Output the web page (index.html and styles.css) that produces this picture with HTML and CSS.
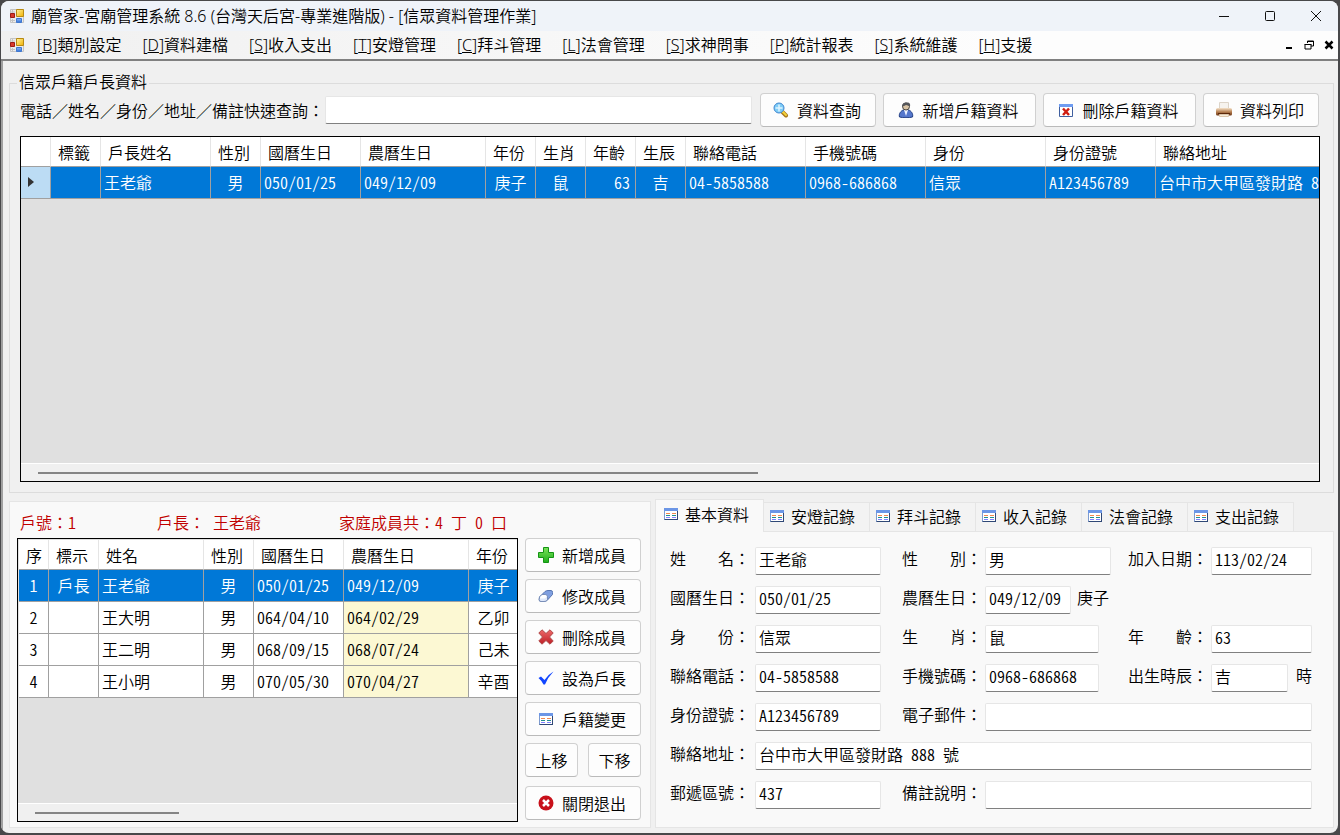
FILE: index.html
```html
<!DOCTYPE html>
<html lang="zh-Hant-TW">
<head>
<meta charset="utf-8">
<title>廟管家-宮廟管理系統 8.6</title>
<link rel="stylesheet" href="styles.css">
</head>
<body>
<svg class="defs" aria-hidden="true">
  <defs>
    <linearGradient id="gYellow" x1="0" y1="0" x2="1" y2="1"><stop offset="0" stop-color="#fff3a0"/><stop offset="1" stop-color="#f0b000"/></linearGradient>
    <linearGradient id="gBlue" x1="0" y1="0" x2="0" y2="1"><stop offset="0" stop-color="#8fb8f4"/><stop offset="1" stop-color="#2f6fd6"/></linearGradient>
    <linearGradient id="gGreen" x1="0" y1="0" x2="0" y2="1"><stop offset="0" stop-color="#7be35a"/><stop offset="1" stop-color="#1fae1c"/></linearGradient>
    <linearGradient id="gBrown" x1="0" y1="0" x2="0" y2="1"><stop offset="0" stop-color="#f5e3cb"/><stop offset=".5" stop-color="#b98354"/><stop offset="1" stop-color="#6b3312"/></linearGradient>
    <linearGradient id="gRed" x1="0" y1="0" x2="0" y2="1"><stop offset="0" stop-color="#ee6a6a"/><stop offset="1" stop-color="#bd1e26"/></linearGradient>
    <symbol id="i-app" viewBox="0 0 16 16">
      <path d="M1.500 1.500h13v13h-13z" fill="#ececec" stroke="#c4c4c4"/>
      <path d="M1 4h5M3.500 1v4M1 12.500h5M3.500 11v4" stroke="#c4c4c4"/>
      <path d="M1.500 5.500h4v4h-4z" fill="#d8392b" stroke="#9c1c14"/>
      <path d="M7.500 1.500h7v7h-7z" fill="url(#gYellow)" stroke="#b88a12"/>
      <path d="M7.500 10.500h5v4h-5z" fill="url(#gBlue)" stroke="#3f78d0"/>
    </symbol>
    <symbol id="i-search" viewBox="0 0 16 16">
      <path d="M9.500 10l3.500 3.500" stroke="#a9781c" stroke-width="4" stroke-linecap="round"/>
      <path d="M9.500 9.500l3.500 3.500" stroke="#f3d23a" stroke-width="2" stroke-linecap="round"/>
      <circle cx="6" cy="6" r="5" fill="#7fcdf7" stroke="#3f86d0"/>
      <path d="M6 2.500v7M2.500 6h7" stroke="#dff4ff" stroke-width="1.500"/>
    </symbol>
    <symbol id="i-user" viewBox="0 0 16 16">
      <path d="M1.500 15C.5 12 3 8.500 5.500 8h5c2.500.5 5 4 4 7-4 1-9 1-13 0z" fill="#5577cc" stroke="#1f3c80"/>
      <path d="M6 8l2 6 2-6z" fill="#eef3ff"/>
      <circle cx="8" cy="4.500" r="3.500" fill="#d8c3a4" stroke="#4a4540"/>
      <path d="M4 5C4 1 7 0 9 .5c3 0 3.500 2 3 4C10.500 4 9 3 8 3 7 4 5 4 4 5z" fill="#55565a"/>
    </symbol>
    <symbol id="i-windel" viewBox="0 0 16 16">
      <path d="M1.500 2.500h13v12h-13z" fill="#fff" stroke="#3f5f9f"/>
      <path d="M1 2h14v3H1z" fill="#6f9cf0"/>
      <path d="M5 6.500l6 6.500M11 6.500l-6 6.500" stroke="#cf1d12" stroke-width="2.500"/>
    </symbol>
    <symbol id="i-print" viewBox="0 0 16 16">
      <path d="M3.500.5h9v6h-9z" fill="#f6f3ee" stroke="#ddd4c8"/>
      <rect x="0" y="6" width="16" height="7.500" rx="1.500" fill="url(#gBrown)"/>
      <path d="M2 11.500h12" stroke="#5b2708"/>
      <path d="M3.500 12.500h9v2h-9z" fill="#f6ead9" stroke="#dcc6aa"/>
    </symbol>
    <symbol id="i-plus" viewBox="0 0 16 16">
      <path d="M5.500.5h5v5h5v5h-5v5h-5v-5h-5v-5h5z" fill="url(#gGreen)" stroke="#149414"/>
    </symbol>
    <symbol id="i-eraser" viewBox="0 0 16 16">
      <path d="M1.500 9l5.500-5.500Q8.500 2.500 10 2.500h3q1.800.2 1.500 2v2L9.500 12Q8 13.500 6 13.500H3Q1 13.500 1.200 11.500z" fill="#7f9fe0" stroke="#5876b2"/>
      <path d="M1.500 9l2.500-2.500h3q2.500.2 2.500 2.500v3Q8 13.500 6 13.500H3Q1 13.500 1.200 11.500z" fill="#dfe8fa" stroke="#7a8fb8"/>
      <path d="M2.500 8.500L4.500 7H7q1.500.3 1.800 1.500L7 10.500H2z" fill="#fff"/>
    </symbol>
    <symbol id="i-cross" viewBox="0 0 16 16">
      <path d="M4 .8l4 3.700L12 .8 15.200 4l-3.700 4 3.700 4-3.200 3.200-4-3.700-4 3.700L.8 12l3.700-4L.8 4z" fill="url(#gRed)" stroke="#b04848" stroke-linejoin="round"/>
    </symbol>
    <symbol id="i-check" viewBox="0 0 16 16">
      <path d="M.5 8l2.500-1.500 3.500 3.500Q10 4.500 15.500 1.500 10 7 7 14.500H5.500Q4 11 .5 8z" fill="#1246ff"/>
    </symbol>
    <symbol id="i-form" viewBox="0 0 16 16">
      <path d="M1.500 2.500h13v11h-13z" fill="#fff" stroke="#7d9bd0"/>
      <path d="M1 2h14v3H1z" fill="#6c96e6"/>
      <path d="M14.500 5v9M1.500 13.500H15" stroke="#2f4876"/>
      <path d="M3 7.500h4M9 7.500h4" stroke="#f08850"/>
      <path d="M3 9.500h4M9 9.500h4" stroke="#218d8d"/>
      <path d="M3 11.500h4M9 11.500h4" stroke="#8080ff"/>
    </symbol>
    <symbol id="i-close" viewBox="0 0 16 16">
      <circle cx="8" cy="8" r="7.500" fill="#c8101a"/>
      <path d="M5 5l6 6M11 5l-6 6" stroke="#fff" stroke-width="2.500"/>
    </symbol>
  </defs>
</svg>

<div class="window">
  <header class="titlebar">
    <svg class="icon"><use href="#i-app"/></svg>
    <h1 class="title">廟管家-宮廟管理系統 8.6 (台灣天后宮-專業進階版) - [信眾資料管理作業]</h1>
    <div class="winbtns">
      <button class="winbtn" aria-label="最小化"><svg viewBox="0 0 12 12"><path d="M1 6.500h10"/></svg></button>
      <button class="winbtn" aria-label="最大化"><svg viewBox="0 0 12 12"><rect x="1.500" y="1.500" width="9" height="9" rx="1"/></svg></button>
      <button class="winbtn" aria-label="關閉"><svg viewBox="0 0 12 12"><path d="M1 1l10 10M11 1L1 11"/></svg></button>
    </div>
  </header>
  <nav class="menubar">
    <svg class="icon"><use href="#i-app"/></svg>
    <div class="menus">
      <button class="menu">[<u>B</u>]類別設定</button>
      <button class="menu">[<u>D</u>]資料建檔</button>
      <button class="menu">[<u>S</u>]收入支出</button>
      <button class="menu">[<u>T</u>]安燈管理</button>
      <button class="menu">[<u>C</u>]拜斗管理</button>
      <button class="menu">[<u>L</u>]法會管理</button>
      <button class="menu">[<u>S</u>]求神問事</button>
      <button class="menu">[<u>P</u>]統計報表</button>
      <button class="menu">[<u>S</u>]系統維護</button>
      <button class="menu">[<u>H</u>]支援</button>
    </div>
    <div class="mdibtns">
      <button class="mdibtn" aria-label="最小化子視窗"><svg viewBox="0 0 10 10"><path d="M2 8h6" stroke-width="2"/></svg></button>
      <button class="mdibtn" aria-label="還原子視窗"><svg viewBox="0 0 10 10"><path d="M3.500 3V1h6v5H7M3 1.500h7M1 4.500h6v4.500H1zM.5 4.500h7"/></svg></button>
      <button class="mdibtn" aria-label="關閉子視窗"><svg viewBox="0 0 10 10"><path d="M1.500 1.500l7 7M8.500 1.500l-7 7" stroke-width="2.500"/></svg></button>
    </div>
  </nav>

  <main class="content">
    <fieldset class="group">
      <legend>信眾戶籍戶長資料</legend>
      <div class="search">
        <label for="q">電話／姓名／身份／地址／備註快速查詢：</label>
        <input class="field grow" id="q" type="text">
        <div class="actions">
          <button class="btn"><svg class="icon"><use href="#i-search"/></svg>資料查詢</button>
          <button class="btn long"><svg class="icon"><use href="#i-user"/></svg>新增戶籍資料</button>
          <button class="btn long"><svg class="icon"><use href="#i-windel"/></svg>刪除戶籍資料</button>
          <button class="btn"><svg class="icon"><use href="#i-print"/></svg>資料列印</button>
        </div>
      </div>
      <div class="grid">
        <div class="viewport">
          <table class="households">
            <colgroup><col class="w30"><col class="w50"><col class="w110"><col class="w50"><col class="w100"><col class="w125"><col class="w50"><col class="w50"><col class="w50"><col class="w50"><col class="w120"><col class="w120"><col class="w120"><col class="w110"><col class="w300"></colgroup>
            <thead><tr><th></th><th>標籤</th><th>戶長姓名</th><th>性別</th><th>國曆生日</th><th>農曆生日</th><th>年份</th><th>生肖</th><th>年齡</th><th>生辰</th><th>聯絡電話</th><th>手機號碼</th><th>身份</th><th>身份證號</th><th>聯絡地址</th></tr></thead>
            <tbody><tr class="selected"><td class="rowhead"><svg class="marker" viewBox="0 0 6 10"><path d="M0 0l6 5-6 5z"/></svg></td><td></td><td>王老爺</td><td class="mid">男</td><td>050/01/25</td><td>049/12/09</td><td class="mid">庚子</td><td class="mid">鼠</td><td class="num">63</td><td class="mid">吉</td><td>04-5858588</td><td>0968-686868</td><td>信眾</td><td>A123456789</td><td>台中市大甲區發財路 888 號</td></tr></tbody>
          </table>
        </div>
        <div class="scroll"><div class="thumb wide"></div></div>
      </div>
    </fieldset>

    <div class="lower">
      <section class="family">
        <div class="summary">
          <span>戶號：<span class="half">1</span></span>
          <span>戶長：<span class="half"> 王老爺</span></span>
          <span>家庭成員共：<span class="half">4 丁 0 口</span></span>
        </div>
        <div class="familybody">
          <div class="grid">
            <div class="viewport inset">
              <table class="members">
                <colgroup><col class="w30"><col class="w50"><col class="w105"><col class="w50"><col class="w90"><col class="w125"><col class="w50"></colgroup>
                <thead><tr><th>序</th><th>標示</th><th>姓名</th><th>性別</th><th>國曆生日</th><th>農曆生日</th><th>年份</th></tr></thead>
                <tbody>
                  <tr class="selected"><td class="mid">1</td><td class="mid">戶長</td><td>王老爺</td><td class="mid">男</td><td>050/01/25</td><td class="lunar">049/12/09</td><td class="mid">庚子</td></tr>
                  <tr><td class="mid">2</td><td></td><td>王大明</td><td class="mid">男</td><td>064/04/10</td><td class="lunar">064/02/29</td><td class="mid">乙卯</td></tr>
                  <tr><td class="mid">3</td><td></td><td>王二明</td><td class="mid">男</td><td>068/09/15</td><td class="lunar">068/07/24</td><td class="mid">己未</td></tr>
                  <tr><td class="mid">4</td><td></td><td>王小明</td><td class="mid">男</td><td>070/05/30</td><td class="lunar">070/04/27</td><td class="mid">辛酉</td></tr>
                </tbody>
              </table>
            </div>
            <div class="scroll"><div class="thumb narrow"></div></div>
          </div>
          <div class="side">
            <button class="btn"><svg class="icon"><use href="#i-plus"/></svg>新增成員</button>
            <button class="btn"><svg class="icon"><use href="#i-eraser"/></svg>修改成員</button>
            <button class="btn"><svg class="icon"><use href="#i-cross"/></svg>刪除成員</button>
            <button class="btn"><svg class="icon"><use href="#i-check"/></svg>設為戶長</button>
            <button class="btn"><svg class="icon"><use href="#i-form"/></svg>戶籍變更</button>
            <div class="pair"><button class="btn">上移</button><button class="btn">下移</button></div>
            <button class="btn last"><svg class="icon"><use href="#i-close"/></svg>關閉退出</button>
          </div>
        </div>
      </section>

      <section class="detail">
        <div class="tabs" role="tablist">
          <button class="tab active" role="tab" aria-selected="true"><svg class="icon"><use href="#i-form"/></svg>基本資料</button>
          <button class="tab" role="tab"><svg class="icon"><use href="#i-form"/></svg>安燈記錄</button>
          <button class="tab" role="tab"><svg class="icon"><use href="#i-form"/></svg>拜斗記錄</button>
          <button class="tab" role="tab"><svg class="icon"><use href="#i-form"/></svg>收入記錄</button>
          <button class="tab" role="tab"><svg class="icon"><use href="#i-form"/></svg>法會記錄</button>
          <button class="tab" role="tab"><svg class="icon"><use href="#i-form"/></svg>支出記錄</button>
          <div class="tabfill"></div>
        </div>
        <form class="panel">
          <label for="f1">姓　　名：</label><input class="field" id="f1" value="王老爺">
          <label class="second" for="f2">性　　別：</label><input class="field" id="f2" value="男">
          <label class="third" for="f3">加入日期：</label><input class="field" id="f3" value="113/02/24">

          <label for="f4">國曆生日：</label><input class="field" id="f4" value="050/01/25">
          <label class="second" for="f5">農曆生日：</label>
          <div class="cell"><input class="field date" id="f5" value="049/12/09"><span>庚子</span></div>

          <label class="first" for="f6">身　　份：</label><input class="field" id="f6" value="信眾">
          <label class="second" for="f7">生　　肖：</label><div class="cell"><input class="field short" id="f7" value="鼠"></div>
          <label class="third" for="f8">年　　齡：</label><input class="field" id="f8" value="63">

          <label for="f9">聯絡電話：</label><input class="field" id="f9" value="04-5858588">
          <label class="second" for="f10">手機號碼：</label><div class="cell"><input class="field short" id="f10" value="0968-686868"></div>
          <label class="third" for="f11">出生時辰：</label><div class="cell hour"><input class="field grow" id="f11" value="吉"><span>時</span></div>

          <label for="f12">身份證號：</label><input class="field" id="f12" value="A123456789">
          <label class="second" for="f13">電子郵件：</label><input class="field span3" id="f13">

          <label for="f14">聯絡地址：</label><input class="field span5" id="f14" value="台中市大甲區發財路 888 號">

          <label for="f15">郵遞區號：</label><input class="field" id="f15" value="437">
          <label class="second" for="f16">備註說明：</label><input class="field span3" id="f16">
        </form>
      </section>
    </div>
  </main>
</div>
</body>
</html>
```
FILE: styles.css
```css
* { box-sizing: border-box; }

body {
  margin: 0;
  min-height: 100vh;
  display: flex;
  padding: 1px 2px 2px 1px;
  background: #48484a;
  color: #000;
  font: 350 16px/20px "Noto Sans CJK TC", sans-serif;
}

button, input { font: inherit; color: inherit; }
button { white-space: nowrap; }
label { white-space: nowrap; }

/* Half-width digits, so that data lines up two to a Chinese character */
table, .field, .half { font-feature-settings: "hwid"; }

.defs { position: absolute; width: 0; height: 0; }
.icon { width: 16px; height: 16px; flex: none; }

.window {
  flex: 1;
  min-width: 0;
  display: flex;
  flex-direction: column;
  background: #f0f0f0;
  border-radius: 8px;
  overflow: hidden;
}

/* Title bar and menu */
.titlebar, .menubar {
  display: flex;
  align-items: center;
  font-family: "Noto Sans", "Noto Sans CJK TC", sans-serif;
}
.titlebar { height: 30px; padding: 0 0 1px 8px; gap: 6px; background: #eff3f9; }
.title { margin: 0; font-size: 16px; font-weight: 350; flex: 1; }
.winbtns { display: flex; }
.winbtn {
  width: 46px;
  height: 29px;
  padding: 0 0 0 2px;
  border: 0;
  background: none;
  display: grid;
  place-items: center;
}
.winbtn svg { width: 12px; height: 12px; fill: none; stroke: #111; }

.menubar {
  height: 30px;
  padding: 0 4px 0 8px;
  gap: 4px;
  background: linear-gradient(90deg, #f0f0f0, #fdfdfd 75%);
  border-bottom: 2px solid #808080;
}
.menus { display: flex; flex: 1; gap: 5px; }
.menu { border: 0; background: none; padding: 0 8px; }
.mdibtns { display: flex; gap: 10px; }
.mdibtn { border: 0; background: none; padding: 0; width: 10px; height: 20px; display: flex; align-items: center; }
.mdibtn svg { width: 10px; height: 10px; display: block; fill: none; stroke: #000; }

/* Main area */
.content {
  flex: 1;
  display: flex;
  flex-direction: column;
  gap: 6px;
  padding: 12px 4px 5px 6px;
  border-left: 2px solid #a0a0a0;
}

.group {
  flex: 1;
  display: flex;
  flex-direction: column;
  gap: 9px;
  margin: 0;
  min-width: 0;
  padding: 0 13px 10px 10px;
  border: 1px solid #dcdcdc;
}
.group legend { padding: 0 2px 4px; margin-left: -3px; line-height: 16px; }

.search { display: flex; align-items: center; gap: 1px; padding-right: 1px; }
.actions { display: flex; gap: 7px; margin-left: 7px; }

.btn {
  display: flex;
  align-items: center;
  justify-content: center;
  gap: 8px;
  width: 116px;
  height: 34px;
  padding: 0 2px 1px 0;
  background: #fdfdfd;
  border: 1px solid #d0d0d0;
  border-bottom-color: #bababa;
  border-radius: 4px;
}
.long { width: 153px; }

.field {
  height: 28px;
  width: 100%;
  min-width: 0;
  padding: 0 3px 5px;
  background: #fff;
  border: 1px solid #e6e6e6;
  border-bottom-color: #808080;
  border-radius: 2px;
}
.grow { flex: 1; }

/* Data grids */
.grid {
  flex: 1;
  min-width: 0;
  display: flex;
  flex-direction: column;
  border: 1px solid #000;
  background: #e0e0e0;
}
.viewport { flex: 1; overflow: hidden; }
.inset { padding: 1px 0 0 1px; }

table { border-collapse: separate; border-spacing: 0; table-layout: fixed; }
.households { width: 1435px; }
.members { width: 500px; }
.w30 { width: 30px; }
.w50 { width: 50px; }
.w90 { width: 90px; }
.w100 { width: 100px; }
.w105 { width: 105px; }
.w110 { width: 110px; }
.w120 { width: 120px; }
.w125 { width: 125px; }
.w300 { width: 300px; }

th, td { overflow: hidden; white-space: nowrap; text-align: left; }
th {
  height: 30px;
  padding: 0 0 0 7px;
  font-weight: 350;
  background: #fff;
  border-right: 1px solid #e5e5e5;
  border-bottom: 1px solid #a0a0a0;
}
td {
  height: 32px;
  padding: 0 3px 1px;
  background: #fff;
  border-right: 1px solid #a0a0a0;
  border-bottom: 1px solid #a0a0a0;
}
.mid { text-align: center; }
.num { text-align: right; padding-right: 5px; }
.lunar { background: #fcf8d3; }
.selected td { background: #0078d7; color: #fff; }
.selected .rowhead { background: #bcdcf4; padding-left: 7px; }
.marker { display: block; width: 6px; height: 10px; fill: #333; }

.scroll {
  height: 18px;
  display: flex;
  align-items: center;
  background: #f0f0f0;
  border-top: 1px solid #fff;
  padding: 0 17px;
}
.thumb { height: 2px; background: #858585; }
.wide { width: 57%; }
.narrow { width: 31%; }

/* Lower half */
.lower {
  display: grid;
  grid-template-columns: minmax(0, 642fr) minmax(0, 679fr);
  gap: 4px;
}

.family {
  margin-top: 2px;
  padding: 10px 9px 5px 7px;
  display: flex;
  flex-direction: column;
  gap: 6px;
  background: #f9f9f9;
  border: 1px solid #e5e5e5;
}
.summary {
  display: grid;
  grid-template-columns: 137px 182px auto;
  padding-left: 3px;
  color: #c00000;
}
.familybody { flex: 1; display: flex; gap: 7px; }
.side { width: 116px; display: flex; flex-direction: column; gap: 7px; }
.pair { display: flex; justify-content: space-between; gap: 10px; }
.pair .btn { flex: 1; padding: 0 0 1px; }
.last { margin-top: 2px; }

.detail { display: flex; flex-direction: column; }
.tabs { display: flex; align-items: flex-end; }
.tab {
  display: flex;
  align-items: center;
  gap: 6px;
  height: 30px;
  padding: 0 14px 2px 5px;
  background: #f3f3f3;
  border: 1px solid #e5e5e5;
  border-left-width: 0;
}
.tab.active {
  height: 33px;
  padding: 0 14px 4px 7px;
  background: #f9f9f9;
  border-width: 1px 1px 0 1px;
}
.tabfill { flex: 1; border-bottom: 1px solid #e5e5e5; }

.panel {
  flex: 1;
  display: grid;
  grid-template-columns: 85px 126px 104px 126px 100px minmax(0, 1fr);
  grid-auto-rows: 28px;
  row-gap: 11px;
  align-items: center;
  align-content: start;
  padding: 15px 21px 18px 14px;
  background: #f9f9f9;
  border: 1px solid #e5e5e5;
  border-top-width: 0;
}
.panel label, .cell span { padding-bottom: 6px; }
.first { grid-column: 1; }
.second { padding-left: 21px; }
.third { padding-left: 17px; }
.cell { display: flex; align-items: center; gap: 6px; white-space: nowrap; }
.date { flex: none; width: 86px; }
.short { width: 114px; }
.hour { gap: 8px; }
.span3 { grid-column: span 3; }
.span5 { grid-column: span 5; }
```
